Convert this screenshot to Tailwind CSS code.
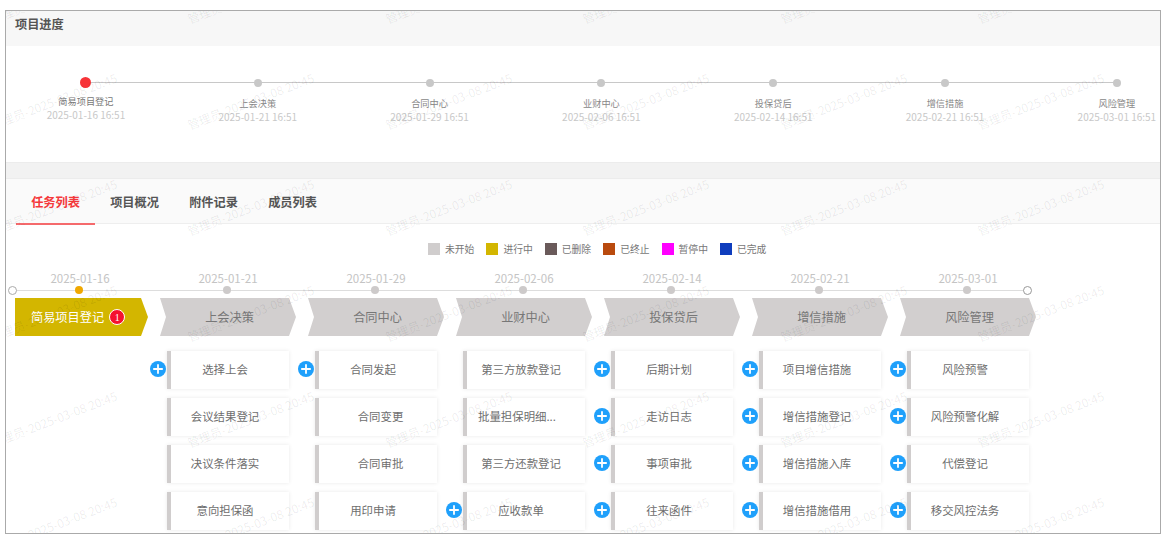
<!DOCTYPE html>
<html lang="zh-CN">
<head>
    <meta charset="UTF-8">
    <title>项目进度</title>
    <script src="https://cdn.jsdelivr.net/npm/@tailwindcss/browser@4"></script>
</head>
<body class="bg-white font-['Noto_Sans_CJK_SC','Noto_Sans',sans-serif] overflow-hidden">
    <div id="frame" class="relative ml-[5px] mt-[10px] w-[1156px] h-[524px] border border-[#aaa] overflow-hidden">

        <!-- 项目进度 -->
        <div class="h-[35px] bg-[#f7f7f7] pl-[9px] pt-[5px] text-[12.2px] leading-4 font-bold text-[#555]">项目进度</div>
        <div class="h-[116px] ml-[-6px] flex">
            <div class="relative w-[171.83px] shrink-0 text-center">
                <div class="absolute left-1/2 top-[36px] w-full h-px bg-[#c8c8c8]"></div>
                <div class="relative mt-[31px] h-[11px] flex items-center justify-center"><div class="w-[11px] h-[11px] rounded-full bg-[#f73338]"></div></div>
                <div class="mt-[6px] text-[9.2px] leading-[14px] text-[#777]">简易项目登记</div>
                <div class="text-[10px] leading-[14px] text-[#c8c8c8]">2025-01-16 16:51</div>
            </div>
            <div class="relative w-[171.83px] shrink-0 text-center">
                <div class="absolute left-1/2 top-[36px] w-full h-px bg-[#c8c8c8]"></div>
                <div class="relative mt-[31px] h-[11px] flex items-center justify-center"><div class="w-2 h-2 rounded-full bg-[#c8c8c8]"></div></div>
                <div class="mt-[8px] text-[9.2px] leading-[14px] text-[#888]">上会决策</div>
                <div class="text-[10px] leading-[14px] text-[#c8c8c8]">2025-01-21 16:51</div>
            </div>
            <div class="relative w-[171.83px] shrink-0 text-center">
                <div class="absolute left-1/2 top-[36px] w-full h-px bg-[#c8c8c8]"></div>
                <div class="relative mt-[31px] h-[11px] flex items-center justify-center"><div class="w-2 h-2 rounded-full bg-[#c8c8c8]"></div></div>
                <div class="mt-[8px] text-[9.2px] leading-[14px] text-[#888]">合同中心</div>
                <div class="text-[10px] leading-[14px] text-[#c8c8c8]">2025-01-29 16:51</div>
            </div>
            <div class="relative w-[171.83px] shrink-0 text-center">
                <div class="absolute left-1/2 top-[36px] w-full h-px bg-[#c8c8c8]"></div>
                <div class="relative mt-[31px] h-[11px] flex items-center justify-center"><div class="w-2 h-2 rounded-full bg-[#c8c8c8]"></div></div>
                <div class="mt-[8px] text-[9.2px] leading-[14px] text-[#888]">业财中心</div>
                <div class="text-[10px] leading-[14px] text-[#c8c8c8]">2025-02-06 16:51</div>
            </div>
            <div class="relative w-[171.83px] shrink-0 text-center">
                <div class="absolute left-1/2 top-[36px] w-full h-px bg-[#c8c8c8]"></div>
                <div class="relative mt-[31px] h-[11px] flex items-center justify-center"><div class="w-2 h-2 rounded-full bg-[#c8c8c8]"></div></div>
                <div class="mt-[8px] text-[9.2px] leading-[14px] text-[#888]">投保贷后</div>
                <div class="text-[10px] leading-[14px] text-[#c8c8c8]">2025-02-14 16:51</div>
            </div>
            <div class="relative w-[171.83px] shrink-0 text-center">
                <div class="absolute left-1/2 top-[36px] w-full h-px bg-[#c8c8c8]"></div>
                <div class="relative mt-[31px] h-[11px] flex items-center justify-center"><div class="w-2 h-2 rounded-full bg-[#c8c8c8]"></div></div>
                <div class="mt-[8px] text-[9.2px] leading-[14px] text-[#888]">增信措施</div>
                <div class="text-[10px] leading-[14px] text-[#c8c8c8]">2025-02-21 16:51</div>
            </div>
            <div class="relative w-[171.83px] shrink-0 text-center">
                <div class="relative mt-[31px] h-[11px] flex items-center justify-center"><div class="w-2 h-2 rounded-full bg-[#c8c8c8]"></div></div>
                <div class="mt-[8px] text-[9.2px] leading-[14px] text-[#888]">风险管理</div>
                <div class="text-[10px] leading-[14px] text-[#c8c8c8]">2025-03-01 16:51</div>
            </div>
        </div>
        <div class="h-[17px] bg-[#f2f2f2] border-y border-y-[#ececec]"></div>

        <!-- tabs -->
        <div class="h-[45px] bg-[#fafafa] border-b border-[#eee] pl-[10px] flex text-[12.2px] font-bold text-[#555]">
            <div class="w-[79px] h-[46px] pt-[2px] flex items-center justify-center text-[#f5383b] border-b-2 border-[#f56a6c]">任务列表</div>
            <div class="w-[79px] pt-[2px] flex items-center justify-center">项目概况</div>
            <div class="w-[79px] pt-[2px] flex items-center justify-center">附件记录</div>
            <div class="w-[79px] pt-[2px] flex items-center justify-center">成员列表</div>
        </div>

        <!-- legend -->
        <div class="ml-[422px] pt-[19px] flex text-[9.8px] leading-3 text-[#777]">
            <div class="w-[58.4px] flex items-center gap-[5px]"><span class="w-3 h-3 bg-[#d0cdcd]"></span>未开始</div>
            <div class="w-[58.4px] flex items-center gap-[5px]"><span class="w-3 h-3 bg-[#d3b600]"></span>进行中</div>
            <div class="w-[58.4px] flex items-center gap-[5px]"><span class="w-3 h-3 bg-[#6a5a5a]"></span>已删除</div>
            <div class="w-[58.4px] flex items-center gap-[5px]"><span class="w-3 h-3 bg-[#b94a0e]"></span>已终止</div>
            <div class="w-[58.4px] flex items-center gap-[5px]"><span class="w-3 h-3 bg-[#ff00ff]"></span>暂停中</div>
            <div class="w-[58.4px] flex items-center gap-[5px]"><span class="w-3 h-3 bg-[#0f3dbd]"></span>已完成</div>
        </div>

        <!-- flow -->
        <div class="ml-[6px]">
            <div class="mt-[16px] flex h-[15px] text-[11.5px] leading-[14px] text-[#c4c4c4] text-center">
                <div class="w-[148px] pr-3">2025-01-16</div>
                <div class="w-[148px] pr-3">2025-01-21</div>
                <div class="w-[148px] pr-3">2025-01-29</div>
                <div class="w-[148px] pr-3">2025-02-06</div>
                <div class="w-[148px] pr-3">2025-02-14</div>
                <div class="w-[148px] pr-3">2025-02-21</div>
                <div class="w-[148px] pr-3">2025-03-01</div>
            </div>
            <div class="relative w-[1016px] h-2 grid grid-cols-[repeat(7,148px)]">
                <div class="absolute inset-x-0 top-[4px] h-px bg-[#ddd]"></div>
                <div class="absolute left-[-4px] top-[-0.5px] w-[9px] h-[9px] rounded-full bg-white border border-[#aaa]"></div>
                <div class="absolute right-[-4px] top-[-0.5px] w-[9px] h-[9px] rounded-full bg-white border border-[#999]"></div>
                <div class="relative ml-[63px] w-2 h-2 rounded-full bg-[#f0a800]"></div>
                <div class="relative ml-[63px] w-2 h-2 rounded-full bg-[#cdcaca]"></div>
                <div class="relative ml-[63px] w-2 h-2 rounded-full bg-[#cdcaca]"></div>
                <div class="relative ml-[63px] w-2 h-2 rounded-full bg-[#cdcaca]"></div>
                <div class="relative ml-[63px] w-2 h-2 rounded-full bg-[#cdcaca]"></div>
                <div class="relative ml-[63px] w-2 h-2 rounded-full bg-[#cdcaca]"></div>
                <div class="relative ml-[63px] w-2 h-2 rounded-full bg-[#cdcaca]"></div>
            </div>

            <div class="mt-1 ml-[3px] flex gap-3 text-[12.2px] text-[#777]">
                <div class="w-[133px] h-[38px] pl-[16px] flex items-center gap-[5px] bg-[#d3b600] text-white [clip-path:polygon(0_0,126px_0,133px_50%,126px_100%,0_100%)]">
                    简易项目登记
                    <span class="w-4 h-4 rounded-full bg-[#f5122f] border border-white flex items-center justify-center text-[10px] font-['Liberation_Serif',serif]">1</span>
                </div>
                <div class="w-[136px] h-[38px] pl-[3px] flex items-center justify-center bg-[#d2cfcf] [clip-path:polygon(0_0,129px_0,136px_50%,129px_100%,0_100%,6px_50%)]">上会决策</div>
                <div class="w-[136px] h-[38px] pl-[3px] flex items-center justify-center bg-[#d2cfcf] [clip-path:polygon(0_0,129px_0,136px_50%,129px_100%,0_100%,6px_50%)]">合同中心</div>
                <div class="w-[136px] h-[38px] pl-[3px] flex items-center justify-center bg-[#d2cfcf] [clip-path:polygon(0_0,129px_0,136px_50%,129px_100%,0_100%,6px_50%)]">业财中心</div>
                <div class="w-[136px] h-[38px] pl-[3px] flex items-center justify-center bg-[#d2cfcf] [clip-path:polygon(0_0,129px_0,136px_50%,129px_100%,0_100%,6px_50%)]">投保贷后</div>
                <div class="w-[136px] h-[38px] pl-[3px] flex items-center justify-center bg-[#d2cfcf] [clip-path:polygon(0_0,129px_0,136px_50%,129px_100%,0_100%,6px_50%)]">增信措施</div>
                <div class="w-[136px] h-[38px] pl-[3px] flex items-center justify-center bg-[#d2cfcf] [clip-path:polygon(0_0,129px_0,136px_50%,129px_100%,0_100%,6px_50%)]">风险管理</div>
            </div>

            <div id="cards" class="mt-[15px] ml-[155px] flex gap-[26px] text-[11.4px] text-[#6e6e6e]"></div>
        </div>

        <div id="watermark" class="absolute inset-0 pointer-events-none"></div>
    </div>

    <script>
        // [text, has plus button, centred differently]
        const columns = [
            [['选择上会', 1], ['会议结果登记'], ['决议条件落实'], ['意向担保函']],
            [['合同发起', 1], ['合同变更', 0, 1], ['合同审批', 0, 1], ['用印申请']],
            [['第三方放款登记'], ['批量担保明细...', 0, 2], ['第三方还款登记'], ['应收款单', 1]],
            [['后期计划', 1], ['走访日志', 1], ['事项审批', 1], ['往来函件', 1]],
            [['项目增信措施', 1], ['增信措施登记', 1], ['增信措施入库', 1], ['增信措施借用', 1]],
            [['风险预警', 1], ['风险预警化解', 1], ['代偿登记', 1], ['移交风控法务', 1]]
        ];
        const plus = '<svg class="absolute left-[-21px] top-[10px] w-4 h-4" viewBox="0 0 16 16"><circle cx="8" cy="8" r="8" fill="#1fa0fb"/><path d="M3.2 8h9.6M8 3.2v9.6" stroke="#fff" stroke-width="1.8"/></svg>';
        const padding = ['pr-[10px]', 'pl-[5px]', 'pr-[18px]'];

        document.getElementById('cards').innerHTML = columns.map(col =>
            '<div class="w-[122px] flex flex-col gap-[9px]">' + col.map(([text, add, pad]) =>
                '<div class="relative h-[38px] border-l-4 border-[#d0cdcd] bg-white shadow-[0_0_4px_rgba(0,0,0,0.09)] flex items-center justify-center ' + padding[pad || 0] + '">' +
                (add ? plus : '') + '<span class="whitespace-nowrap">' + text + '</span></div>'
            ).join('') + '</div>'
        ).join('');

        // 水印
        let marks = '';
        for (let row = 0; row < 6; row++) {
            for (let col = 0; col < 6; col++) {
                const left = -13 + col * 197.4;
                const bottom = 14 + row * 106;
                marks += '<span class="absolute whitespace-nowrap text-[12px] leading-none text-black/[0.08] origin-bottom-left rotate-[-21deg]" style="left:' + left + 'px;top:' + (bottom - 12) + 'px">管理员-2025-03-08 20:45</span>';
            }
        }
        document.getElementById('watermark').innerHTML = marks;
    </script>
</body>
</html>
